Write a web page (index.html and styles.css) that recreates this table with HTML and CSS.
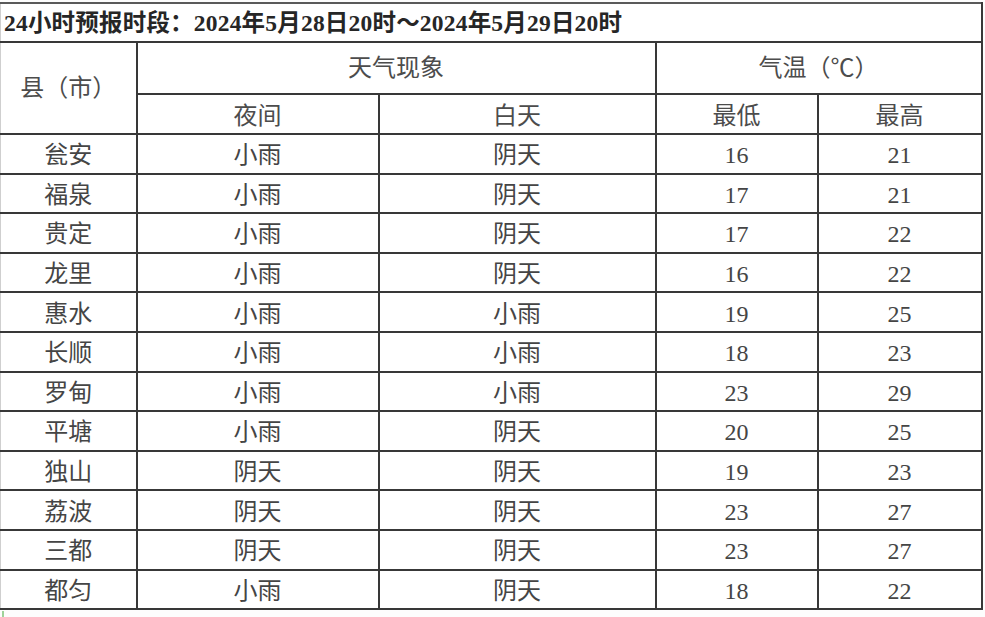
FILE: index.html
```html
<!DOCTYPE html>
<html lang="zh-CN">
<head>
<meta charset="utf-8">
<title>24小时预报</title>
<link rel="stylesheet" href="styles.css">
</head>
<body>
<div class="sheet">
<table class="forecast">
  <colgroup>
    <col class="c-county">
    <col class="c-night">
    <col class="c-day">
    <col class="c-low">
    <col class="c-high">
  </colgroup>
  <thead>
    <tr class="r-title">
      <th colspan="5" class="title">24小时预报时段：2024年5月28日20时～2024年5月29日20时</th>
    </tr>
    <tr class="r-head1">
      <th rowspan="2">县（市）</th>
      <th colspan="2">天气现象</th>
      <th colspan="2">气温（℃）</th>
    </tr>
    <tr class="r-head2">
      <th>夜间</th>
      <th>白天</th>
      <th>最低</th>
      <th>最高</th>
    </tr>
  </thead>
  <tbody>
    <tr><td>瓮安</td><td>小雨</td><td>阴天</td><td>16</td><td>21</td></tr>
    <tr><td>福泉</td><td>小雨</td><td>阴天</td><td>17</td><td>21</td></tr>
    <tr><td>贵定</td><td>小雨</td><td>阴天</td><td>17</td><td>22</td></tr>
    <tr><td>龙里</td><td>小雨</td><td>阴天</td><td>16</td><td>22</td></tr>
    <tr><td>惠水</td><td>小雨</td><td>小雨</td><td>19</td><td>25</td></tr>
    <tr><td>长顺</td><td>小雨</td><td>小雨</td><td>18</td><td>23</td></tr>
    <tr><td>罗甸</td><td>小雨</td><td>小雨</td><td>23</td><td>29</td></tr>
    <tr><td>平塘</td><td>小雨</td><td>阴天</td><td>20</td><td>25</td></tr>
    <tr><td>独山</td><td>阴天</td><td>阴天</td><td>19</td><td>23</td></tr>
    <tr><td>荔波</td><td>阴天</td><td>阴天</td><td>23</td><td>27</td></tr>
    <tr><td>三都</td><td>阴天</td><td>阴天</td><td>23</td><td>27</td></tr>
    <tr><td>都匀</td><td>小雨</td><td>阴天</td><td>18</td><td>22</td></tr>
  </tbody>
</table>
<div class="foot"><span class="mark"></span></div>
</div>
</body>
</html>
```
FILE: styles.css
```css
html, body {
  margin: 0;
  padding: 0;
  background: #fdfdfd;
}

.sheet {
  width: 985px;
  height: 617px;
  overflow: hidden;
  padding-top: 2px;
  box-sizing: border-box;
}

.forecast {
  border-collapse: collapse;
  table-layout: fixed;
  width: 981px;
  background: #ffffff;
  font-family: "Liberation Serif", "Noto Sans CJK SC", serif;
  color: #454545;
  font-size: 24px;
}

.c-county { width: 136px; }
.c-night { width: 242px; }
.c-day { width: 277px; }
.c-low { width: 162px; }
.c-high { width: 164px; }

.forecast th,
.forecast td {
  border: 2px solid #383838;
  padding: 0;
  text-align: center;
  vertical-align: middle;
  font-weight: normal;
  line-height: 1;
}

.forecast tr > :first-child {
  border-left: 1px solid #cfcfcf;
}

.r-title { height: 39px; }
.r-head1 { height: 52px; }
.r-head2 { height: 40px; }
.forecast tbody tr { height: 39.6px; }

.forecast th.title {
  text-align: left;
  padding-left: 3px;
  padding-top: 2px;
  font-weight: bold;
  font-size: 23.5px;
  color: #262626;
  border-top: 2px solid #5a5a5a;
  letter-spacing: 0.2px;
}

.r-head1 th,
.r-head2 th {
  color: #4c4c4c;
}

.r-head2 th {
  padding-top: 4px;
}

.forecast td {
  padding-top: 3px;
}

.foot {
  position: relative;
  height: 9px;
}

.mark {
  position: absolute;
  left: 2px;
  top: 1px;
  width: 2px;
  height: 8px;
  background: #9fd39a;
}
```
